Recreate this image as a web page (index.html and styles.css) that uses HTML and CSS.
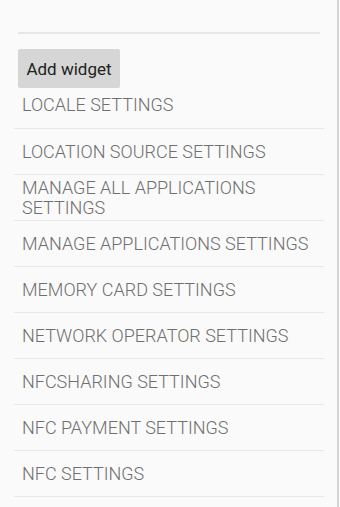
FILE: index.html
```html
<!DOCTYPE html>
<html lang="en">
<head>
    <meta charset="UTF-8">
    <meta name="viewport" content="width=device-width, initial-scale=1.0">
    <title>Widgets</title>
    <link rel="stylesheet" href="styles.css">
</head>
<body>
    <div class="panel">
        <div class="top-rule"></div>
        <button class="add-btn">Add widget</button>
        <ul class="settings-list">
            <li class="first">LOCALE SETTINGS</li>
            <li>LOCATION SOURCE SETTINGS</li>
            <li>MANAGE ALL APPLICATIONS SETTINGS</li>
            <li>MANAGE APPLICATIONS SETTINGS</li>
            <li>MEMORY CARD SETTINGS</li>
            <li>NETWORK OPERATOR SETTINGS</li>
            <li>NFCSHARING SETTINGS</li>
            <li>NFC PAYMENT SETTINGS</li>
            <li>NFC SETTINGS</li>
        </ul>
    </div>
</body>
</html>
```

FILE: styles.css
```css
body {
    margin: 0;
    padding: 0;
    background: #fafafa;
    font-family: Roboto, Arial, sans-serif;
    overflow: hidden;
}

.panel {
    width: 339px;
    height: 507px;
    border-right: 2px solid #d4d4d4;
    padding-top: 32px;
    box-sizing: border-box;
}

.top-rule {
    margin-left: 18px;
    width: 302px;
    height: 2px;
    background: #e6e6e6;
}

.add-btn {
    display: block;
    margin: 15px 0 0 18px;
    width: 102px;
    height: 39px;
    padding: 0;
    font-family: Roboto, Arial, sans-serif;
    font-size: 17px;
    color: #222;
    background: #d6d6d6;
    border: none;
    border-radius: 2px;
}

.settings-list {
    list-style: none;
    margin: 0 0 0 14px;
    padding: 0;
    width: 310px;
}

.settings-list li {
    height: 45px;
    border-bottom: 1px solid #e8e8e8;
    display: flex;
    align-items: center;
    padding-left: 8px;
    padding-right: 2px;
    font-size: 18px;
    font-weight: 300;
    line-height: 20px;
    color: #6f6f6f;
}

.settings-list li.first {
    align-items: flex-start;
    padding-top: 7px;
    box-sizing: border-box;
    height: 41px;
}
```
